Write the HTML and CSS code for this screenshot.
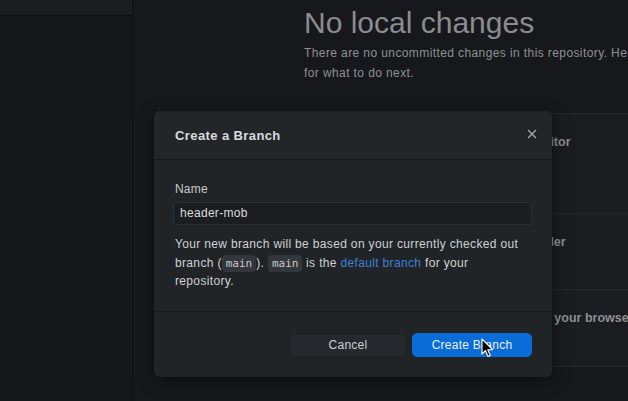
FILE: index.html
```html
<!DOCTYPE html>
<html>
<head>
<meta charset="utf-8">
<link rel="stylesheet" href="styles.css">
</head>
<body>
<div class="app">
  <aside class="sidebar">
    <div class="sidebar-top"></div>
  </aside>
  <main class="main">
    <div class="content">
      <h1 class="title">No local changes</h1>
      <p class="lead">There are no uncommitted changes in this repository. Here are some friendly suggestions<br>for what to do next.</p>
      <div class="cards">
        <div class="card card-1"><span class="card-title">Open the repository in your external editor</span></div>
        <div class="card card-2"><span class="card-title">View the files of your repository in Finder</span></div>
        <div class="card card-3"><span class="card-title">Open the repository page on GitHub in your browser</span></div>
      </div>
    </div>
  </main>
</div>

<div class="overlay">
  <div class="dialog">
    <div class="dialog-header">
      <span class="dialog-title">Create a Branch</span>
      <svg class="close" width="10" height="10" viewBox="0 0 10 10"><path d="M1 1 L9 9 M9 1 L1 9" stroke="#a3a5a8" stroke-width="1.4" fill="none"/></svg>
    </div>
    <div class="dialog-body">
      <label class="label">Name</label>
      <div class="input">header-mob</div>
      <p class="desc">Your new branch will be based on your currently checked out branch (<code>main</code>). <code>main</code> is the <a class="link">default branch</a> for your repository.</p>
    </div>
    <div class="dialog-footer">
      <button class="btn btn-cancel">Cancel</button>
      <button class="btn btn-primary">Create Branch</button>
    </div>
  </div>
  <svg class="cursor" width="13" height="20" viewBox="0 0 13 20"><path d="M1 1 L1 16 L4.5 12.5 L7 18.5 L9.3 17.5 L6.8 11.7 L11.5 11.7 Z" fill="#000" stroke="#fff" stroke-width="1.1" stroke-linejoin="round"/></svg>
</div>
</body>
</html>
```
FILE: styles.css
```css
html, body {
  margin: 0;
  padding: 0;
  width: 628px;
  height: 401px;
  overflow: hidden;
  background: #16171a;
  font-family: "Liberation Sans", Arial, sans-serif;
}
.app {
  display: flex;
  width: 628px;
  height: 401px;
}
.sidebar {
  width: 132px;
  flex: none;
  background: #16171a;
  border-right: 1px solid #0f1012;
}
.sidebar-top {
  height: 15px;
  background: #1b1d20;
  border-bottom: 1px solid #0b0c0e;
}
.main {
  flex: 1;
  background: #17181b;
  overflow: hidden;
}
.content {
  padding: 5px 0 0 171px;
  width: 700px;
}
.title {
  margin: 0;
  font-size: 30px;
  line-height: 36px;
  font-weight: normal;
  color: #8a8c90;
  letter-spacing: 0;
}
.lead {
  margin: 2px 0 0;
  font-size: 12px;
  line-height: 20px;
  color: #8e9094;
  letter-spacing: 0.4px;
  white-space: nowrap;
}
.cards {
  margin-top: 30px;
  margin-left: -14px;
  display: flex;
  flex-direction: column;
}
.card {
  background: #1a1c1f;
  border: 1px solid #25282c;
  border-bottom: none;
  padding: 18px 0 0 26px;
  box-sizing: border-box;
}
.card-1 { height: 100px; }
.card-2 { height: 76px; }
.card-3 { height: 78px; border-bottom: 1px solid #25282c; }
.card-title {
  font-size: 12.5px;
  font-weight: bold;
  color: #8d8f93;
  white-space: nowrap;
}
.card-2 .card-title { margin-left: 3px; }
.card-3 .card-title { margin-left: 4px; }

.overlay {
  position: absolute;
  left: 0;
  top: 0;
  width: 628px;
  height: 401px;
}
.dialog {
  position: absolute;
  left: 154px;
  top: 111px;
  width: 398px;
  height: 266px;
  background: #212427;
  border-radius: 6px;
  box-shadow: 0 4px 16px rgba(0,0,0,0.5);
  display: flex;
  flex-direction: column;
  overflow: hidden;
}
.dialog-header {
  height: 48px;
  background: #232629;
  border-bottom: 1px solid #151719;
  display: flex;
  align-items: center;
  justify-content: space-between;
  padding: 0 15px 0 21px;
  flex: none;
}
.dialog-title {
  font-size: 13px;
  font-weight: bold;
  color: #d9dadc;
  letter-spacing: 0.4px;
}
.close {
  margin-top: -2px;
}
.dialog-body {
  padding: 21px 20px 20px 21px;
  border-bottom: 1px solid #151719;
  flex: none;
}
.label {
  display: block;
  font-size: 12px;
  line-height: 16px;
  color: #c9cbce;
  letter-spacing: 0.2px;
}
.input {
  margin: 5px 0 0 -2px;
  height: 23px;
  box-sizing: border-box;
  background: #1b1d20;
  border: 1px solid #2a2d31;
  border-left-color: #1f3550;
  border-radius: 4px;
  padding: 0 6px;
  font-size: 12px;
  line-height: 21px;
  color: #dadbdd;
  letter-spacing: 0.3px;
}
.desc {
  margin: 10px 10px 0 0;
  font-size: 12px;
  line-height: 18.5px;
  color: #cfd1d4;
  letter-spacing: 0.34px;
}
code {
  display: inline-block;
  font-family: "DejaVu Sans Mono", monospace;
  font-size: 11px;
  line-height: 17px;
  letter-spacing: 0;
  background: #33363b;
  color: #c9cacc;
  border-radius: 4px;
  padding: 0 4px;
}
.link {
  color: #3a80d9;
}
.dialog-footer {
  flex: 1;
  display: flex;
  justify-content: flex-end;
  align-items: flex-start;
  gap: 5px;
  padding: 21px 20px 0 0;
}
.btn {
  height: 24px;
  border-radius: 5px;
  font-family: "Liberation Sans", Arial, sans-serif;
  font-size: 12px;
  letter-spacing: 0.25px;
  padding: 0;
}
.btn-cancel {
  width: 118px;
  background: #25282c;
  border: 1px solid #1a1c1f;
  color: #cdcfd2;
}
.btn-primary {
  width: 120px;
  background: #0a6cd6;
  border: 1px solid #0a6cd6;
  color: #e8f0fb;
}
.cursor {
  position: absolute;
  left: 481px;
  top: 338px;
}
```
